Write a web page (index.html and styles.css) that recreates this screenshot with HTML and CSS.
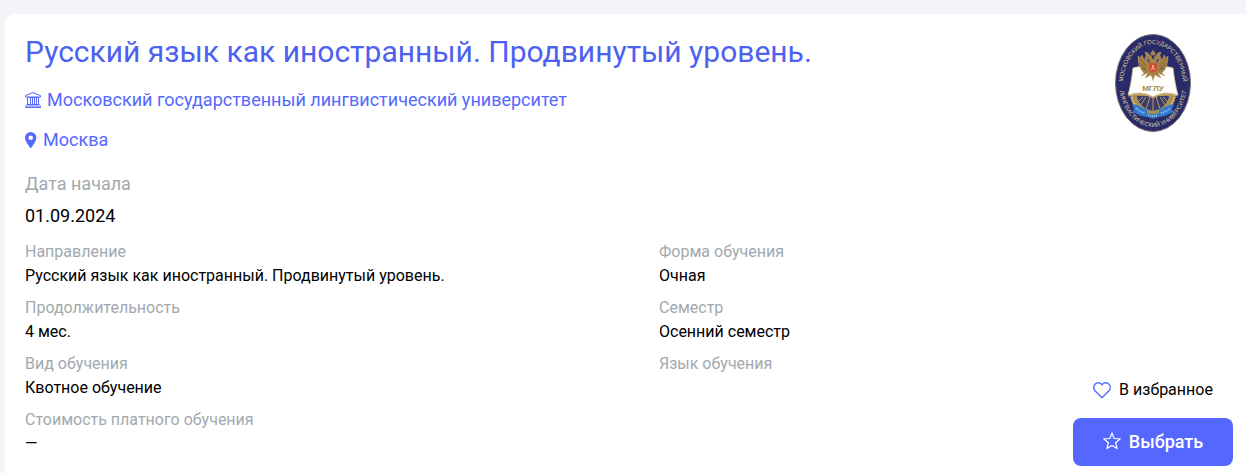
FILE: index.html
```html
<!DOCTYPE html>
<html lang="ru">
<head>
<meta charset="utf-8">
<meta name="viewport" content="width=device-width, initial-scale=1">
<title>Русский язык как иностранный. Продвинутый уровень.</title>
<link rel="stylesheet" href="styles.css">
</head>
<body>
<main class="card">
  <div class="info">
    <h1 class="title"><a href="#program">Русский язык как иностранный. Продвинутый уровень.</a></h1>
    <a class="place university" href="#university">
      <svg width="16" height="16" viewBox="0 0 16 16" fill="none" stroke="currentColor" aria-hidden="true"><path d="M.5 5V3.600L8 .6l7.500 3V5zM2 5.500h12M2.500 5.500v7M5.500 5.500v7M7.500 5.500v7M9.500 5.500v7M11.500 5.500v7M13.500 5.500v7M1.500 12.500h13M.5 15.500v-1.500h15v1.500z"/></svg>
      <span>Московский государственный лингвистический университет</span>
    </a>
    <a class="place city" href="#city">
      <svg width="12" height="16" viewBox="0 0 12 16" fill="currentColor" aria-hidden="true"><path fill-rule="evenodd" d="M5.700 0A5.700 5.700 0 0 0 0 5.700C0 8.500 2.500 11.500 4.900 15.400Q5.700 16.400 6.500 15.400C8.900 11.500 11.400 8.500 11.400 5.700A5.700 5.700 0 0 0 5.700 0zm0 3.500a2.300 2.300 0 1 1 0 4.600 2.300 2.300 0 0 1 0-4.600z"/></svg>
      <span>Москва</span>
    </a>
    <dl class="start">
      <dt>Дата начала</dt>
      <dd>01.09.2024</dd>
    </dl>
    <div class="details">
      <dl class="column">
        <div><dt>Направление</dt><dd>Русский язык как иностранный. Продвинутый уровень.</dd></div>
        <div><dt>Продолжительность</dt><dd>4 мес.</dd></div>
        <div><dt>Вид обучения</dt><dd>Квотное обучение</dd></div>
        <div><dt>Стоимость платного обучения</dt><dd>—</dd></div>
      </dl>
      <dl class="column">
        <div><dt>Форма обучения</dt><dd>Очная</dd></div>
        <div><dt>Семестр</dt><dd>Осенний семестр</dd></div>
        <div><dt>Язык обучения</dt><dd></dd></div>
      </dl>
    </div>
  </div>
  <aside class="side">
    <svg class="emblem" width="76" height="98" viewBox="0 0 76 98" role="img" aria-label="Эмблема МГЛУ">
      <defs>
        <path id="arc-top" d="M8 51A30 41 0 0 1 68 51"/>
        <path id="arc-bottom" d="M4 48A34 45 0 0 0 72 48"/>
      </defs>
      <ellipse cx="38" cy="49" rx="37.500" ry="48.500" fill="#292b68" stroke="#77716f"/>
      <path d="M15 58Q15 78 38 82Q61 78 61 58z" fill="#a98f55"/>
      <path d="M16 60Q18 75 34 81M60 60Q58 75 42 81" fill="none" stroke="#d2bd80" stroke-width="2" stroke-dasharray="2 1"/>
      <path d="M22 62h32q-2 12-16 15Q24 74 22 62z" fill="#3a3c70"/>
      <path d="M38 63v14M35 63l-4 12M41 63l4 12M31 63l-6 9M45 63l6 9M28 63l-5 5M48 63l5 5" stroke="#b99a56" stroke-width="1"/>
      <path d="M13 61Q16 51 18 34Q29 30 38 38Q47 30 58 34Q60 51 63 61Q49 56 38 63Q27 56 13 61z" fill="#fffefa" stroke="#d8c99c" stroke-width=".8"/>
      <path d="M13 62Q27 58 38 64Q49 58 63 62" fill="none" stroke="#c5a869"/>
      <path d="M38 40v8" stroke="#dcd5c4"/>
      <g fill="#a48145" stroke="#c4a56c" stroke-width=".5">
        <path d="M35 31L31 24L29 26L27 21L25 24L23 22Q23 34 29 39L26 42L33 39L30 44L36 41L38 46L40 41L46 44L43 39L50 42L47 39Q53 34 53 22L51 24L49 21L47 26L45 24L41 31z"/>
        <path d="M36 31L34 25L30 24L32 20L36 22L38 27L40 22L44 20L46 24L42 25L40 31z"/>
        <path d="M36 21V18l1 1 1-3 1 3 1-1v3zM31 21l-1-3 3 1 1 2zM45 21l1-3-3 1-1 2z"/>
      </g>
      <path d="M25 25l6 7M24 29l7 6M26 34l6 2M51 25l-6 7M52 29l-7 6M50 34l-6 2" stroke="#695333" stroke-width=".6"/>
      <path d="M34 29h8v7q-2 2-4 3-2-1-4-3z" fill="#d84632" stroke="#a88144" stroke-width=".6"/>
      <path d="M36.500 36l1.500-4 1.500 4M37 31l1 1 1-1" fill="none" stroke="#e9d3b0" stroke-width=".8"/>
      <text class="emblem-name" x="38" y="57">МГЛУ</text>
      <path d="M17 70l5 1 8 4 2-1v5q6 2 12 0v-5l2 1 8-4 5-1-2 5 1 3-8 4-6 1-6 2-6-2-6-1-8-4 1-3z" fill="#347acb"/>
      <path d="M21 74q4 4 9 5M33 81q5 2 10 0M46 79q5-1 9-5" fill="none" stroke="#b8d4eb" stroke-width="1.500" stroke-dasharray="1 1"/>
      <text class="emblem-ring"><textPath href="#arc-top" startOffset="50%">МОСКОВСКИЙ ГОСУДАРСТВЕННЫЙ</textPath></text>
      <text class="emblem-ring"><textPath href="#arc-bottom" startOffset="50%">ЛИНГВИСТИЧЕСКИЙ УНИВЕРСИТЕТ</textPath></text>
    </svg>
    <div class="actions">
      <button class="favorite" type="button">
        <svg width="18" height="17" viewBox="0 0 18 17" fill="none" stroke="currentColor" stroke-width="1.400" stroke-linejoin="round" aria-hidden="true"><path d="M9 3C7.500.3 4.200.1 2.200 2.100.2 4.100.3 7.100 2.200 9L9 15.800 15.800 9c1.900-1.900 2-4.900 0-6.900C13.800.1 10.500.3 9 3z"/></svg>
        <span>В избранное</span>
      </button>
      <button class="select" type="button">
        <svg width="18" height="20" viewBox="0 0 18 20" fill="none" stroke="currentColor" stroke-width="1.200" stroke-linejoin="round" aria-hidden="true"><path d="M9 1l2.200 5.500 6 .4-4.600 3.800 1.500 5.900L9 13.400l-5.100 3.200 1.500-5.900L.8 6.900l6-.4z"/></svg>
        <span>Выбрать</span>
      </button>
    </div>
  </aside>
</main>
</body>
</html>
```
FILE: styles.css
```css
* {
  box-sizing: border-box;
}

body {
  margin: 0;
  padding: 14px 0 0 5px;
  min-height: 100vh;
  display: flex;
  background: #f4f5fa;
  color: #000;
  font: 16px/24px Roboto, sans-serif;
}

.card {
  flex: 1;
  display: flex;
  padding: 20px 13px 7px 20px;
  background: #fff;
  border-radius: 10px 0 0 0;
}

.info {
  flex: 1;
  display: flex;
  flex-direction: column;
  align-items: flex-start;
}

a {
  color: #5468ff;
  text-decoration: none;
}

.title {
  margin: 0 0 18px;
  font-size: 30px;
  line-height: 36px;
  font-weight: 400;
}

.title a {
  color: #4d61f0;
}

.place {
  display: flex;
  align-items: center;
  gap: 6px;
  margin-bottom: 16px;
  font-size: 18px;
}

.city {
  margin-bottom: 20px;
}

dl,
dd {
  margin: 0;
}

dt {
  color: #a1a9af;
}

.start {
  display: grid;
  gap: 8px;
  margin-bottom: 12px;
  font-size: 18px;
}

.details {
  align-self: stretch;
  display: grid;
  grid-template-columns: 634fr 414fr;
}

.column {
  display: flex;
  flex-direction: column;
  gap: 8px;
}

.side {
  width: 160px;
  display: flex;
  flex-direction: column;
  justify-content: space-between;
  align-items: center;
}

.emblem-ring,
.emblem-name {
  font-family: "Liberation Sans", sans-serif;
  text-anchor: middle;
}

.emblem-ring {
  fill: #d8c79b;
  font-size: 6px;
}

.emblem-name {
  fill: #a98a4b;
  font-size: 8px;
  font-weight: 700;
}

.actions {
  align-self: stretch;
  display: flex;
  flex-direction: column;
  gap: 16px;
}

button {
  display: flex;
  align-items: center;
  justify-content: center;
  gap: 8px;
  padding: 0;
  border: 0;
  font: inherit;
  cursor: pointer;
}

.favorite {
  background: none;
  color: #000;
}

.favorite svg {
  color: #5468ff;
}

.select {
  height: 48px;
  border-radius: 8px;
  background: #5468ff;
  color: #fff;
  font-size: 18px;
  font-weight: 500;
}
```
